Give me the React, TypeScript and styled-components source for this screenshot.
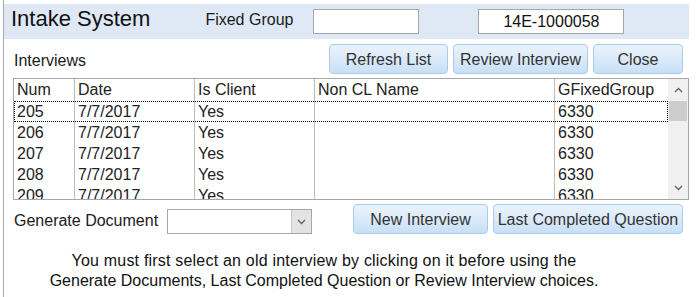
import React from "react";
import styled, { createGlobalStyle } from "styled-components";

const Global = createGlobalStyle`
  html, body { margin: 0; padding: 0; background: #ffffff; }
  body { font-family: "Liberation Sans", Arial, sans-serif; font-size: 16px; color: #222; }
  * { box-sizing: border-box; }
`;

const Frame = styled.div`
  margin-left: 3px;
  width: 687px;
  height: 297px;
  border-left: 1px solid #a6a6a6;
  padding-top: 4px;
  overflow: hidden;
`;

const Header = styled.div`
  width: 685px;
  height: 35px;
  background: #dfe9f5;
  display: flex;
  align-items: flex-start;
  padding-left: 7px;
`;

const Title = styled.div`
  font-size: 22px;
  line-height: 26px;
  margin-top: 2px;
  color: #111;
  white-space: nowrap;
`;

const HeaderLabel = styled.div<{ $ml: number }>`
  font-size: 16px;
  line-height: 18px;
  margin-top: 7px;
  margin-left: ${(p) => p.$ml}px;
  color: #1a1a1a;
  white-space: nowrap;
`;

const TextBox = styled.div<{ $w: number; $ml: number }>`
  width: ${(p) => p.$w}px;
  height: 25px;
  margin-top: 5px;
  margin-left: ${(p) => p.$ml}px;
  background: #fff;
  border: 1px solid #a6a6a6;
  font-size: 16px;
  line-height: 23px;
  text-align: center;
  color: #111;
`;

const ToolRow = styled.div`
  margin-top: 5px;
  height: 30px;
  display: flex;
  align-items: center;
  padding-left: 10px;
  padding-right: 6px;
  width: 685px;
`;

const SectionLabel = styled.div`
  font-size: 16px;
  line-height: 18px;
  margin-top: 3px;
  color: #1a1a1a;
  white-space: nowrap;
`;

const ButtonGroup = styled.div`
  margin-left: auto;
  display: flex;
  gap: 5px;
`;

const Button = styled.button<{ $w: number }>`
  width: ${(p) => p.$w}px;
  height: 30px;
  padding: 2px 0 0 0;
  border: 1px solid #a9cbec;
  border-radius: 4px;
  background: linear-gradient(to bottom, #eaf3fc 0%, #dbeaf9 50%, #c7dff6 100%);
  font-family: "Liberation Sans", Arial, sans-serif;
  font-size: 16px;
  line-height: 18px;
  color: #333;
  white-space: nowrap;
`;

const Table = styled.div`
  margin-top: 4px;
  margin-left: 9px;
  width: 676px;
  height: 122px;
  border: 1px solid #a6a6a6;
  display: flex;
  overflow: hidden;
`;

const Grid = styled.div`
  flex: 1;
  overflow: hidden;
`;

const Row = styled.div<{ $h: number; $focus?: boolean }>`
  display: flex;
  height: ${(p) => p.$h}px;
  line-height: ${(p) => p.$h}px;
  ${(p) => (p.$focus ? "outline: 1px dotted #000; outline-offset: -1px;" : "")}
`;

const Cell = styled.div<{ $w?: number; $first?: boolean }>`
  ${(p) => (p.$w ? `width: ${p.$w}px;` : "flex: 1;")}
  flex-shrink: 0;
  padding-left: 3px;
  border-left: ${(p) => (p.$first ? "none" : "1px solid #bdbdbd")};
  font-size: 16px;
  color: #222;
  white-space: nowrap;
  overflow: hidden;
`;

const ScrollBar = styled.div`
  width: 20px;
  background: #f0f0f0;
  display: flex;
  flex-direction: column;
  align-items: center;
`;

const ArrowBox = styled.div`
  height: 22px;
  width: 20px;
  display: flex;
  align-items: center;
  justify-content: center;
`;

const Thumb = styled.div`
  width: 18px;
  height: 20px;
  background: #cdcdcd;
`;

const Track = styled.div`
  flex: 1;
`;

const BottomRow = styled.div`
  margin-top: 4px;
  height: 30px;
  width: 685px;
  display: flex;
  align-items: center;
  padding-left: 10px;
  padding-right: 6px;
`;

const Select = styled.div`
  align-self: flex-end;
  margin-left: 9px;
  width: 145px;
  height: 25px;
  border: 1px solid #a6a6a6;
  background: #fff;
  display: flex;
  justify-content: flex-end;
`;

const SelectButton = styled.div`
  width: 20px;
  height: 23px;
  background: #e3e3e3;
  border-left: 1px solid #c4c4c4;
  display: flex;
  align-items: center;
  justify-content: center;
`;

const Message = styled.div`
  margin-top: 17px;
  width: 640px;
  text-align: center;
  font-size: 16px;
  line-height: 20px;
  color: #111;
`;

const Line = styled.div<{ $ls?: number }>`
  letter-spacing: ${(p) => p.$ls ?? 0}px;
  white-space: nowrap;
`;

const Chevron = ({ up }: { up?: boolean }) => (
  <svg width="9" height="6" viewBox="0 0 9 6">
    <path
      d={up ? "M1 5 L4.5 1.5 L8 5" : "M1 1 L4.5 4.5 L8 1"}
      fill="none"
      stroke="#606060"
      strokeWidth="1.3"
    />
  </svg>
);

const cols = [60, 120, 120, 240];
const data = [
  ["205", "7/7/2017", "Yes", "", "6330"],
  ["206", "7/7/2017", "Yes", "", "6330"],
  ["207", "7/7/2017", "Yes", "", "6330"],
  ["208", "7/7/2017", "Yes", "", "6330"],
  ["209", "7/7/2017", "Yes", "", "6330"],
];
const heads = ["Num", "Date", "Is Client", "Non CL Name", "GFixedGroup"];

export default function App() {
  const renderCells = (vals: string[]) =>
    vals.map((v, i) => (
      <Cell key={i} $w={cols[i]} $first={i === 0}>
        {v}
      </Cell>
    ));
  return (
    <>
      <Global />
      <Frame>
        <Header>
          <Title>Intake System</Title>
          <HeaderLabel $ml={55}>Fixed Group</HeaderLabel>
          <TextBox $w={106} $ml={20} />
          <TextBox $w={146} $ml={59}>14E-1000058</TextBox>
        </Header>
        <ToolRow>
          <SectionLabel>Interviews</SectionLabel>
          <ButtonGroup>
            <Button $w={119}>Refresh List</Button>
            <Button $w={135}>Review Interview</Button>
            <Button $w={90}>Close</Button>
          </ButtonGroup>
        </ToolRow>
        <Table>
          <Grid>
            <Row $h={22}>{renderCells(heads)}</Row>
            {data.map((r, i) => (
              <Row key={i} $h={21} $focus={i === 0}>
                {renderCells(r)}
              </Row>
            ))}
          </Grid>
          <ScrollBar>
            <ArrowBox>
              <Chevron up />
            </ArrowBox>
            <Thumb />
            <Track />
            <ArrowBox>
              <Chevron />
            </ArrowBox>
          </ScrollBar>
        </Table>
        <BottomRow>
          <SectionLabel>Generate Document</SectionLabel>
          <Select>
            <SelectButton>
              <Chevron />
            </SelectButton>
          </Select>
          <ButtonGroup>
            <Button $w={135}>New Interview</Button>
            <Button $w={190}>Last Completed Question</Button>
          </ButtonGroup>
        </BottomRow>
        <Message>
          <Line $ls={0.2}>You must first select an old interview by clicking on it before using the</Line>
          <Line>Generate Documents, Last Completed Question or Review Interview choices.</Line>
        </Message>
      </Frame>
    </>
  );
}
